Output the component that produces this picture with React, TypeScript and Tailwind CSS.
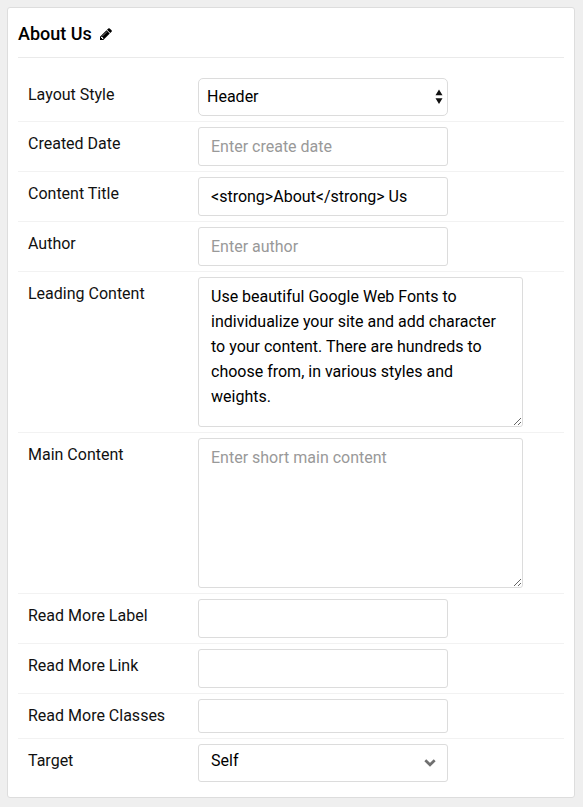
import type { ReactNode } from "react";

const control =
  "block border border-[#dcdcdc] bg-white text-base text-black outline-none placeholder:text-[#999999] focus:border-[#999999]";
const inputBox = `${control} w-full max-w-[250px] rounded-[3px] px-3`;
const areaBox = `${control} h-[150px] w-full resize rounded-[3px] px-3 py-1.5 leading-[25px]`;

type RowProps = { id: string; label: string; children: ReactNode };

function Row({ id, label, children }: RowProps) {
  return (
    <div className="flex items-start border-b border-[#f2f2f2] py-[5px] last:border-b-0">
      <label htmlFor={id} className="w-[180px] shrink-0 pt-[5px] pl-[10px] leading-6">
        {label}
      </label>
      <div className="min-w-0 max-w-[325px] flex-1">{children}</div>
    </div>
  );
}

export default function App() {
  return (
    <main className="min-h-screen bg-[#efefef] py-[7px] pr-2 pl-[7px] font-['Roboto','Liberation_Sans',sans-serif] text-base text-[#111111]">
      <form className="rounded-[3px] border border-[#dddddd] bg-white px-[10px] pb-[10px]">
        <header className="flex h-[50px] items-center gap-2 border-b border-[#eaeaea] pt-[3px]">
          <h1 className="text-lg font-medium text-black">About Us</h1>
          <button type="button" aria-label="Edit title" className="cursor-pointer text-black">
            <svg viewBox="0 128 1536 1536" className="block size-3" fill="currentColor">
              <path d="M363 1536l91-91-235-235-91 91v107h128v128h107zm523-928q0-22-22-22-10 0-17 7l-542 542q-7 7-7 17 0 22 22 22 10 0 17-7l542-542q7-7 7-17zm-54-192l416 416-832 832h-416v-416zm683 96q0 53-37 90l-166 166-416-416 166-165q36-38 90-38 53 0 91 38l235 234q37 39 37 91z" />
            </svg>
          </button>
        </header>

        <div className="pt-[15px]">
          <Row id="layout" label="Layout Style">
            <div className="relative max-w-[250px]">
              <select
                id="layout"
                className={`${control} h-[38px] w-full appearance-none rounded-[5px] px-2`}
              >
                <option>Header</option>
              </select>
              <svg
                viewBox="0 0 8 16"
                className="pointer-events-none absolute top-[11px] right-[5px] h-4 w-2"
                aria-hidden="true"
              >
                <path d="M4 .6 7.5 6.3H.5ZM4 15 .5 9.3h7Z" fill="#111111" />
              </svg>
            </div>
          </Row>
          <Row id="created" label="Created Date">
            <input id="created" className={`${inputBox} h-[39px]`} placeholder="Enter create date" />
          </Row>
          <Row id="title" label="Content Title">
            <input
              id="title"
              className={`${inputBox} h-[39px]`}
              defaultValue="<strong>About</strong> Us"
            />
          </Row>
          <Row id="author" label="Author">
            <input id="author" className={`${inputBox} h-[39px]`} placeholder="Enter author" />
          </Row>
          <Row id="leading" label="Leading Content">
            <textarea
              id="leading"
              className={areaBox}
              defaultValue="Use beautiful Google Web Fonts to individualize your site and add character to your content. There are hundreds to choose from, in various styles and weights."
            />
          </Row>
          <Row id="main" label="Main Content">
            <textarea id="main" className={areaBox} placeholder="Enter short main content" />
          </Row>
          <Row id="more-label" label="Read More Label">
            <input id="more-label" className={`${inputBox} h-[39px]`} />
          </Row>
          <Row id="more-link" label="Read More Link">
            <input id="more-link" className={`${inputBox} h-[39px]`} />
          </Row>
          <Row id="more-classes" label="Read More Classes">
            <input id="more-classes" className={`${inputBox} h-[34px]`} />
          </Row>
          <Row id="target" label="Target">
            <div className="relative max-w-[250px]">
              <select id="target" className={`${inputBox} h-[38px] appearance-none pb-1`}>
                <option>Self</option>
              </select>
              <svg
                viewBox="0 0 12 8"
                className="pointer-events-none absolute top-[15px] right-3 h-2 w-3"
                aria-hidden="true"
              >
                <path d="M1.3 1.3 6 5.8 10.7 1.3" fill="none" stroke="#707070" strokeWidth="2.7" />
              </svg>
            </div>
          </Row>
        </div>
      </form>
    </main>
  );
}
